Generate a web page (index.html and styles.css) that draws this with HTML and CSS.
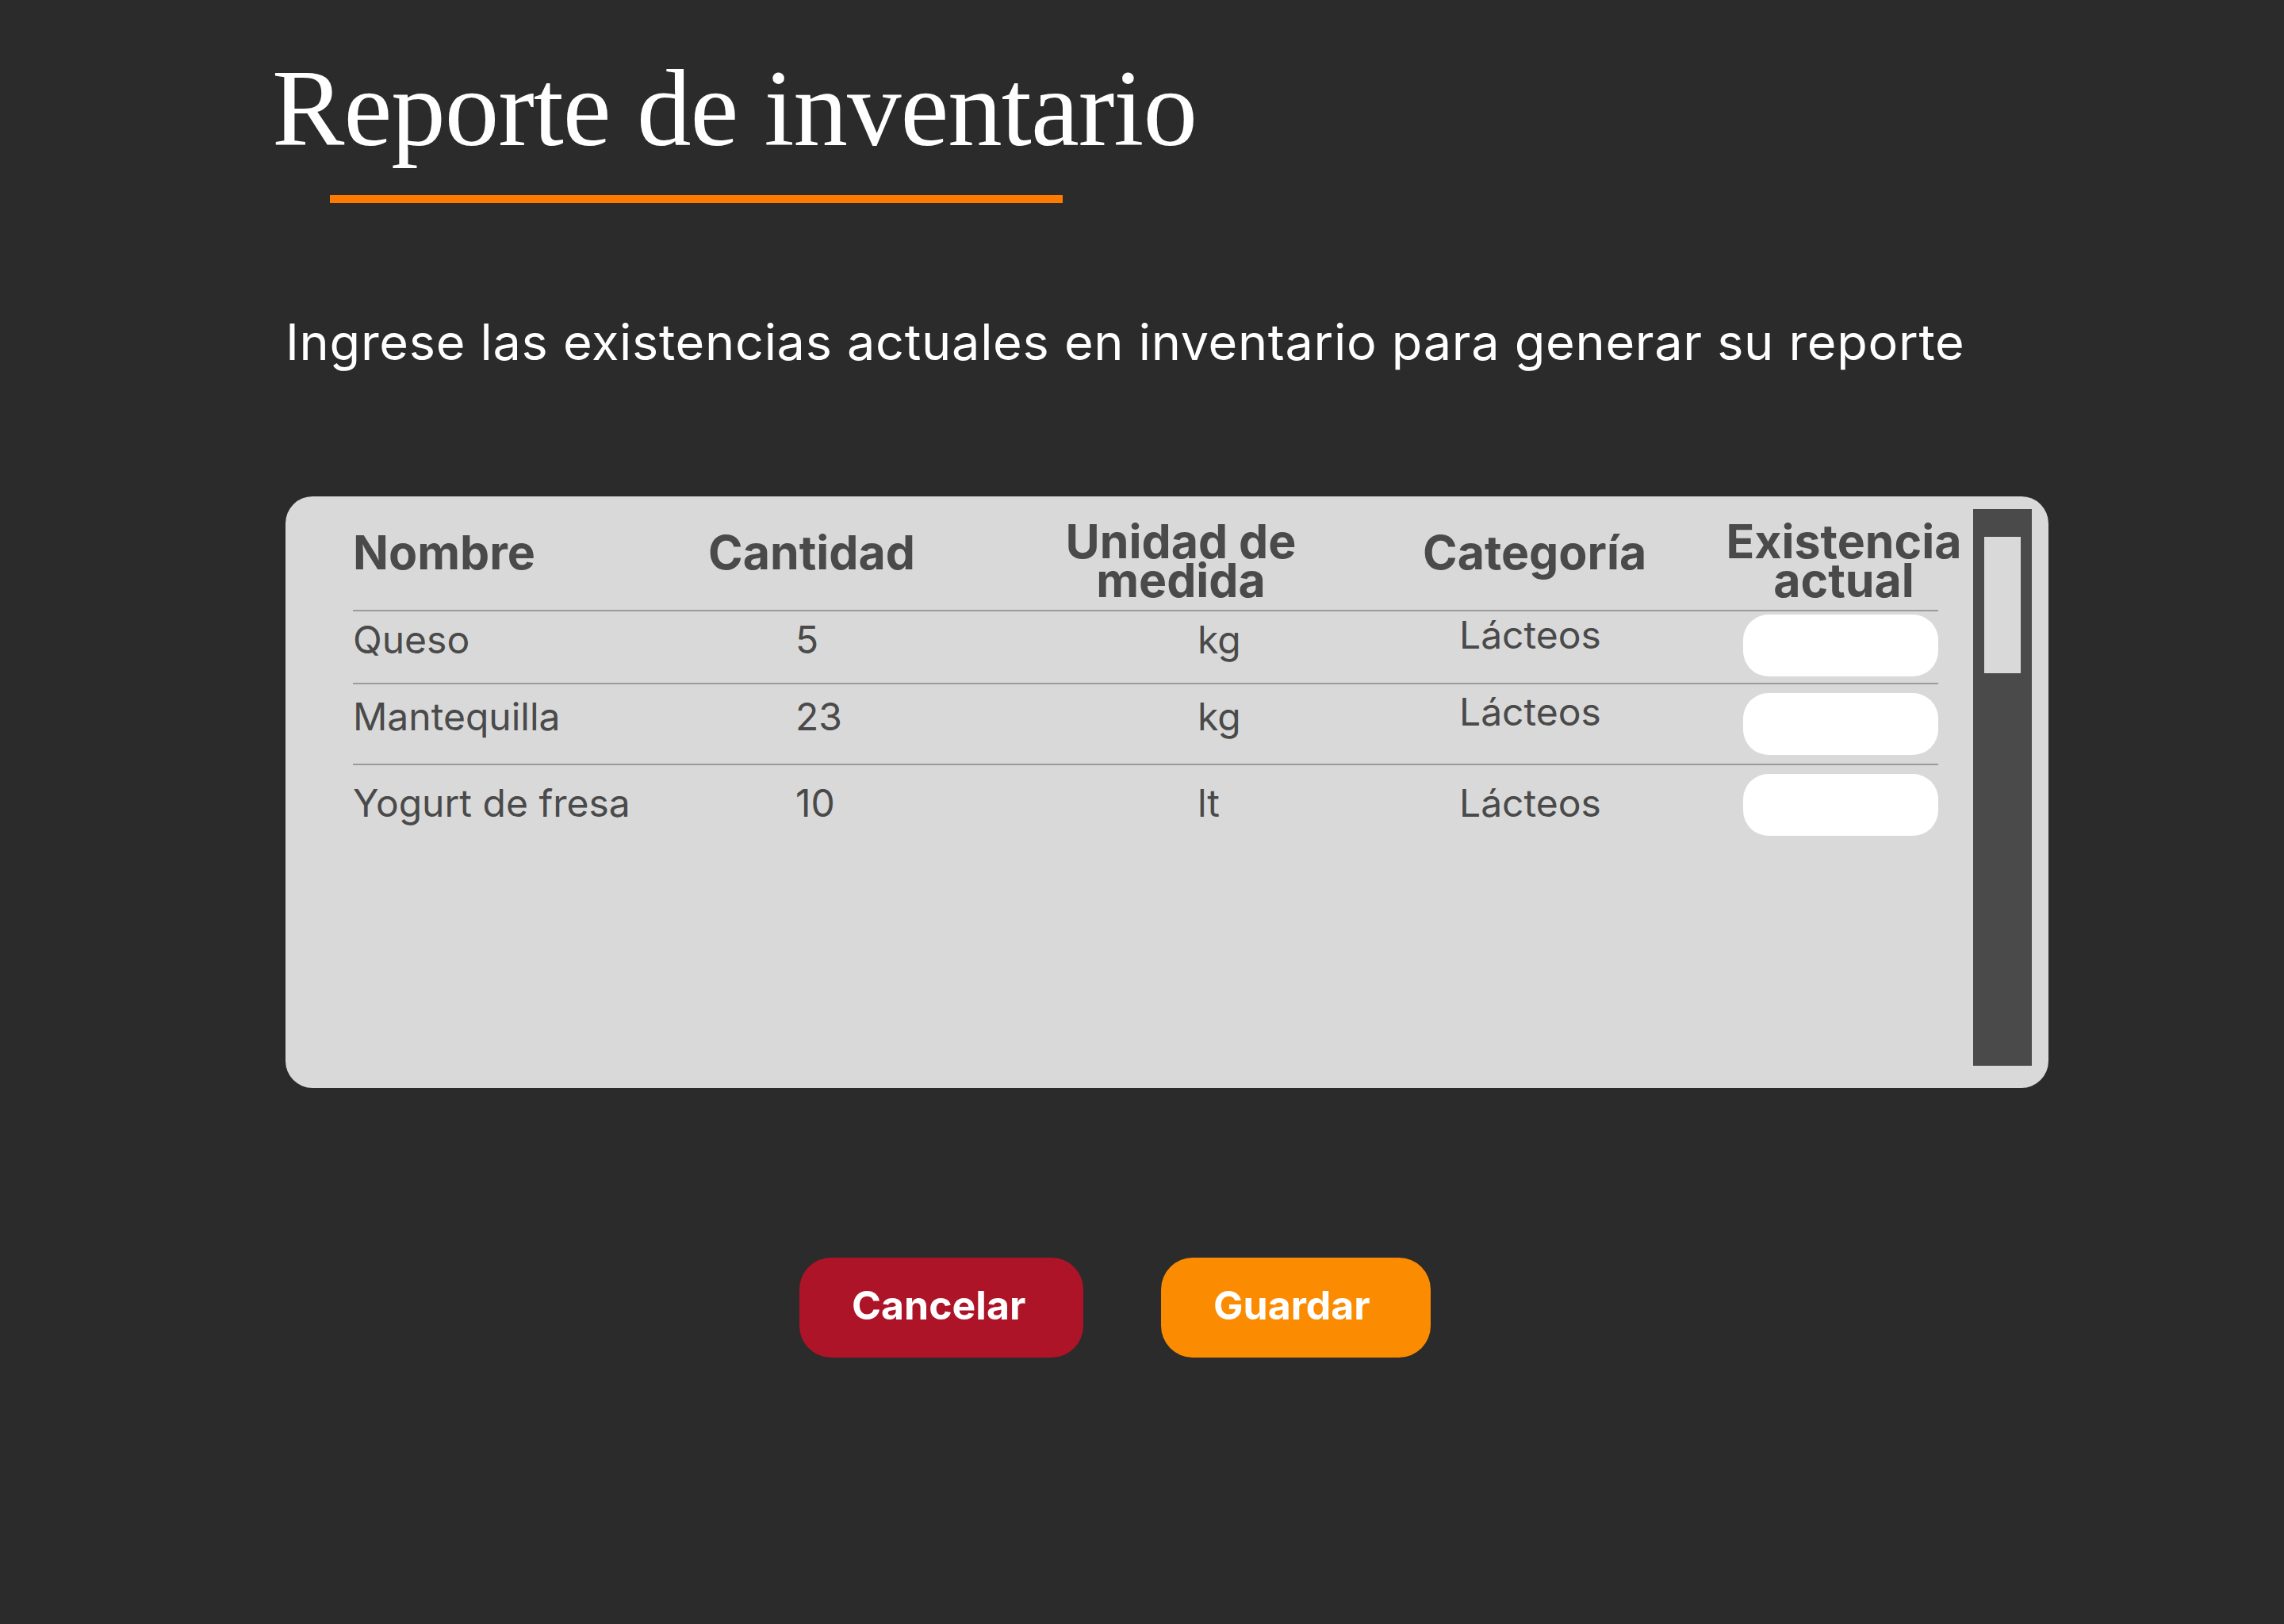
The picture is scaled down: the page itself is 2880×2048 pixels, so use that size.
FILE: index.html
```html
<!DOCTYPE html>
<html lang="es">
<head>
<meta charset="utf-8">
<title>Reporte de inventario</title>
<link rel="stylesheet" href="styles.css">
</head>
<body>
<main class="page">
  <h1 class="title">Reporte de inventario</h1>
  <div class="title-rule"></div>
  <p class="subtitle">Ingrese las existencias actuales en inventario para generar su reporte</p>

  <section class="card">
    <div class="table">
      <div class="thead">
        <div class="th th-name">Nombre</div>
        <div class="th th-qty">Cantidad</div>
        <div class="th th-unit">Unidad de<br>medida</div>
        <div class="th th-cat">Categoría</div>
        <div class="th th-stock">Existencia<br>actual</div>
      </div>
      <div class="row row-first">
        <div class="td td-name">Queso</div>
        <div class="td td-qty">5</div>
        <div class="td td-unit">kg</div>
        <div class="td td-cat">Lácteos</div>
        <div class="td td-stock"><input class="stock-input" type="text" aria-label="Existencia actual Queso"></div>
      </div>
      <div class="row">
        <div class="td td-name">Mantequilla</div>
        <div class="td td-qty">23</div>
        <div class="td td-unit">kg</div>
        <div class="td td-cat">Lácteos</div>
        <div class="td td-stock"><input class="stock-input" type="text" aria-label="Existencia actual Mantequilla"></div>
      </div>
      <div class="row row-last">
        <div class="td td-name">Yogurt de fresa</div>
        <div class="td td-qty">10</div>
        <div class="td td-unit">lt</div>
        <div class="td td-cat">Lácteos</div>
        <div class="td td-stock"><input class="stock-input" type="text" aria-label="Existencia actual Yogurt de fresa"></div>
      </div>
    </div>
    <div class="scrollbar"><div class="scroll-thumb"></div></div>
  </section>

  <div class="actions">
    <button class="btn btn-cancel" type="button">Cancelar</button>
    <button class="btn btn-save" type="button">Guardar</button>
  </div>
</main>
</body>
</html>
```

FILE: styles.css
```css
* { box-sizing: border-box; }

html, body {
  margin: 0;
  padding: 0;
  background: #2b2b2b;
}

body {
  font-family: "Inter", "Noto Sans", sans-serif;
  color: #ffffff;
  min-height: 2048px;
}

.page {
  display: flex;
  flex-direction: column;
  align-items: flex-start;
  padding: 69px 0 0 360px;
}

.title {
  margin: 0 0 0 -17px;
  font-family: "Liberation Serif", "Times New Roman", serif;
  font-weight: 400;
  font-size: 137px;
  line-height: 137px;
  letter-spacing: -1px;
  color: #ffffff;
}

.title-rule {
  margin: 40px 0 0 56px;
  width: 924px;
  height: 10px;
  background: #ff7b00;
}

.subtitle {
  margin: 138px 0 0 0;
  font-size: 63px;
  line-height: 75px;
  letter-spacing: 0.7px;
  font-weight: 400;
  color: #ffffff;
}

.card {
  margin-top: 157px;
  width: 2223px;
  height: 746px;
  background: #d9d9d9;
  border-radius: 34px;
  padding: 16px 21px 28px 85px;
  display: flex;
  gap: 44px;
}

.table {
  width: 1999px;
  margin-top: 16px;
  color: #4a4a4a;
}

.thead,
.row {
  display: grid;
  grid-template-columns: 425px 420px 430px 430px 294px;
}

.thead {
  align-items: start;
  padding-bottom: 13px;
  border-bottom: 2px solid #9b9b9b;
}

.th {
  font-weight: 700;
  font-size: 59px;
  line-height: 49px;
  white-space: nowrap;
}

.th-name { padding-top: 14px; }
.th-qty { padding-top: 14px; padding-left: 23px; }
.th-unit { text-align: center; padding-right: 32px; }
.th-cat { padding-top: 14px; padding-left: 74px; }
.th-stock { width: 350px; text-align: center; }

.row {
  height: 102px;
  align-items: center;
  border-bottom: 2px solid #9b9b9b;
}

.row-first { height: 92px; }
.row-last { border-bottom: none; height: 100px; }

.td {
  font-size: 48px;
  line-height: 58px;
  font-weight: 400;
  white-space: nowrap;
  padding-bottom: 18px;
}

.row-last .td { padding-bottom: 4px; }

.td-qty { padding-left: 133px; }
.td-unit { padding-left: 220px; }
.td-cat { padding-left: 120px; }
.row .td-cat { padding-bottom: 30px; }
.row-last .td-cat { padding-bottom: 4px; }

.row .td-stock {
  padding-bottom: 0;
  display: flex;
  justify-content: flex-end;
}

.row-first .td-stock { padding-bottom: 4px; }

.stock-input {
  width: 246px;
  height: 78px;
  border: none;
  border-radius: 32px;
  background: #ffffff;
  outline: none;
  padding: 0 20px;
  font: inherit;
}

.scrollbar {
  width: 74px;
  background: #4a4a4a;
  padding: 35px 14px 0;
}

.scroll-thumb {
  width: 46px;
  height: 172px;
  background: #d9d9d9;
}

.actions {
  margin-top: 214px;
  margin-left: 648px;
  display: flex;
  gap: 98px;
}

.btn {
  height: 126px;
  border: none;
  border-radius: 40px;
  font-family: "Inter", "Noto Sans", sans-serif;
  font-weight: 700;
  font-size: 50px;
  color: #ffffff;
  text-align: left;
  padding: 0 0 6px 66px;
  cursor: pointer;
}

.btn-cancel {
  width: 358px;
  background: #ae1427;
}

.btn-save {
  width: 340px;
  background: #fb8b00;
}
```
